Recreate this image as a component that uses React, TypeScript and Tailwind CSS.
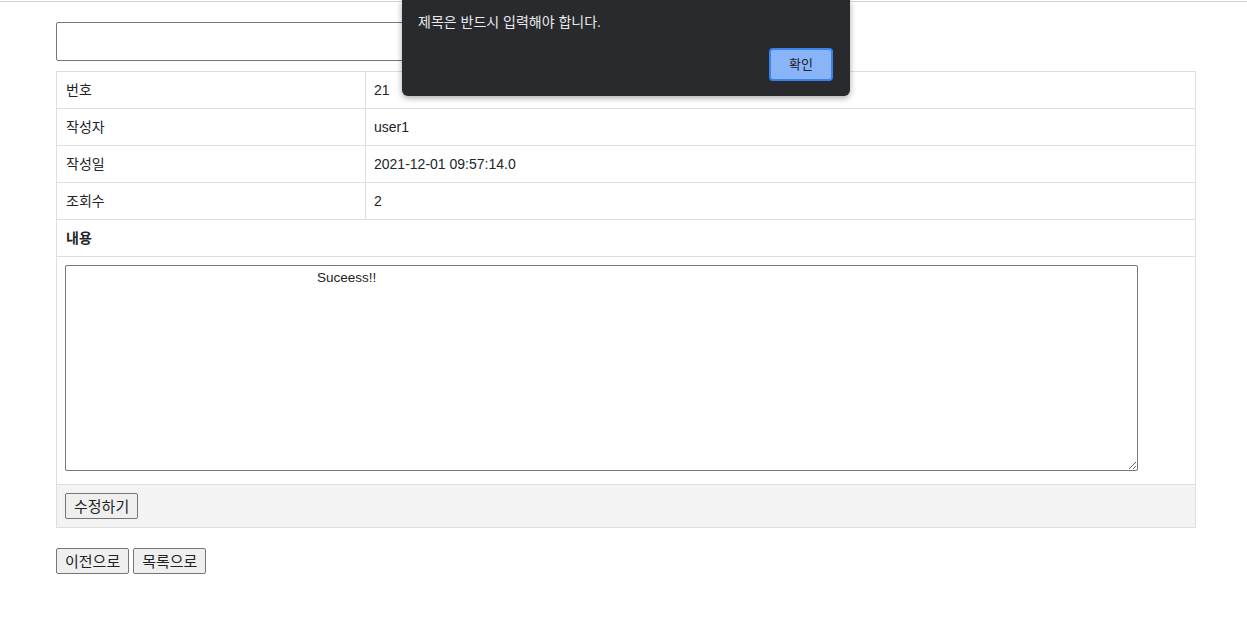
import * as React from 'react'

const font = { fontFamily: '"Liberation Sans", "Noto Sans CJK KR", sans-serif' }

const rows: [string, string][] = [
  ['번호', '21'],
  ['작성자', 'user1'],
  ['작성일', '2021-12-01 09:57:14.0'],
  ['조회수', '2'],
]

const btn =
  'h-[26px] px-[8px] text-[15px] leading-none text-[#222] bg-[#efefef] border border-[#767676] rounded-[2px]'

export default function App() {
  return (
    <div className="relative min-h-[636px] bg-white text-[#212529]" style={font}>
      {/* 상단 구분선 */}
      <div className="h-[1px]" />
      <div className="h-[1px] bg-[#d4d4d4]" />

      <div className="px-[56px] pt-[20px]">
        <input
          type="text"
          className="block w-[600px] h-[39px] border border-[#767676] rounded-[2px] px-2 outline-none"
        />

        <table className="mt-[10px] w-[1140px] border-collapse text-[14px]">
          <tbody>
            {rows.map(([label, value]) => (
              <tr key={label} className="h-[37px]">
                <td className="w-[309px] border border-[#dedede] pl-[9px]">{label}</td>
                <td className="border border-[#dedede] pl-[8px]">{value}</td>
              </tr>
            ))}
            <tr className="h-[37px]">
              <td colSpan={2} className="border border-[#dedede] pl-[9px] font-bold">
                내용
              </td>
            </tr>
            <tr>
              <td colSpan={2} className="border border-[#dedede] pl-[8px] pt-[8px] pb-[13px]">
                <textarea
                  defaultValue="Suceess!!"
                  className="block w-[1073px] h-[206px] border border-[#767676] rounded-[2px] px-[2px] py-[2px] text-[13.5px] indent-[249px] text-[#222] outline-none"
                  style={font}
                />
              </td>
            </tr>
            <tr className="h-[43px] bg-[#f3f3f3]">
              <td colSpan={2} className="border border-[#dedede] pl-[8px]">
                <button className={btn}>수정하기</button>
              </td>
            </tr>
          </tbody>
        </table>

        <div className="mt-[20px] flex gap-[4px]">
          <button className={btn}>이전으로</button>
          <button className={btn}>목록으로</button>
        </div>
      </div>

      {/* alert 대화상자 */}
      <div className="absolute left-[402px] top-0 w-[448px] h-[96px] bg-[#292a2d] rounded-b-[6px] shadow-[0_2px_6px_rgba(0,0,0,0.35)] px-[16px] pt-[12px]">
        <p className="text-[14px] text-[#e8eaed]">제목은 반드시 입력해야 합니다.</p>
        <div className="mt-[15px] flex justify-end pr-[1px]">
          <button className="w-[64px] h-[33px] rounded-[4px] bg-[#8ab4f8] border-2 border-[#3b82f0] text-[13px] text-[#202124]">
            확인
          </button>
        </div>
      </div>
    </div>
  )
}
